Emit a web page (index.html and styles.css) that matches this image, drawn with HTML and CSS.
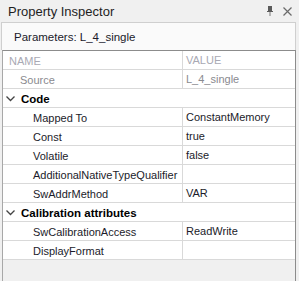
FILE: index.html
```html
<!DOCTYPE html>
<html>
<head>
<meta charset="utf-8">
<link rel="stylesheet" href="styles.css">
</head>
<body>
<div class="panel">
  <div class="titlebar">
    <span class="title">Property Inspector</span>
    <span class="tools">
      <svg class="pin" width="6" height="10" viewBox="0 0 6 10"><rect x="1" y="0" width="4" height="6" fill="#5a5a5a"/><rect x="0" y="5" width="6" height="1" fill="#5a5a5a"/><rect x="2.5" y="6" width="1" height="4" fill="#7a7a7a"/></svg>
      <svg class="close" width="9" height="9" viewBox="0 0 9 9"><path d="M0.5 0.5 L8.5 8.5 M8.5 0.5 L0.5 8.5" stroke="#6a6a6a" stroke-width="1.2"/></svg>
    </span>
  </div>
  <div class="params">Parameters: L_4_single</div>
  <div class="grid">
    <div class="row head"><div class="name">NAME</div><div class="val">VALUE</div></div>
    <div class="row src"><div class="name l1">Source</div><div class="val">L_4_single</div></div>
    <div class="row group"><span class="chev"><svg width="9" height="6" viewBox="0 0 9 6"><path d="M0.5 0.5 L4.5 4.5 L8.5 0.5" fill="none" stroke="#444" stroke-width="1.3"/></svg></span><span class="gname">Code</span></div>
    <div class="row"><div class="name l2">Mapped To</div><div class="val">ConstantMemory</div></div>
    <div class="row"><div class="name l2">Const</div><div class="val">true</div></div>
    <div class="row"><div class="name l2">Volatile</div><div class="val">false</div></div>
    <div class="row"><div class="name l2">AdditionalNativeTypeQualifier</div><div class="val"></div></div>
    <div class="row"><div class="name l2">SwAddrMethod</div><div class="val">VAR</div></div>
    <div class="row group"><span class="chev"><svg width="9" height="6" viewBox="0 0 9 6"><path d="M0.5 0.5 L4.5 4.5 L8.5 0.5" fill="none" stroke="#444" stroke-width="1.3"/></svg></span><span class="gname">Calibration attributes</span></div>
    <div class="row"><div class="name l2">SwCalibrationAccess</div><div class="val">ReadWrite</div></div>
    <div class="row"><div class="name l2">DisplayFormat</div><div class="val"></div></div>
  </div>
</div>
</body>
</html>
```

FILE: styles.css
```css
html, body {
  margin: 0;
  padding: 0;
  background: #f0f0f0;
}
body {
  font-family: "Liberation Sans", Arial, sans-serif;
  font-size: 11px;
  color: #1b1b2a;
}
.panel {
  width: 299px;
  height: 281px;
  display: flex;
  flex-direction: column;
  overflow: hidden;
  box-sizing: border-box;
}
.titlebar {
  height: 22px;
  flex: none;
  display: flex;
  align-items: center;
  justify-content: space-between;
  padding: 0 7px 0 8px;
  font-size: 13px;
  color: #1e1e1e;
}
.tools {
  display: flex;
  align-items: center;
  gap: 10px;
}
.params {
  margin: 0 3px 0 1px;
  height: 28px;
  flex: none;
  box-sizing: border-box;
  border: 1px solid #cfcfcf;
  border-bottom: none;
  background: #fafafa;
  display: flex;
  align-items: center;
  padding-left: 12px;
  font-size: 11.5px;
}
.grid {
  flex: 1;
  margin: 0 3px 0 2px;
  border-top: 1px solid #8c8c8c;
  border-left: 1px solid #a8a8a8;
  border-right: 1px solid #8c8c8c;
  background: #f0f0f0;
}
.row {
  display: flex;
  height: 19px;
  box-sizing: border-box;
  border-bottom: 1px solid #d9d9d9;
  background: #fff;
  align-items: center;
  font-size: 11px;
  padding-top: 1px;
}
.name {
  width: 179px;
  box-sizing: border-box;
  flex: none;
  height: 100%;
  display: flex;
  align-items: center;
  white-space: nowrap;
  overflow: visible;
  position: relative;
  z-index: 1;
}
.val {
  flex: 1;
  height: 100%;
  display: flex;
  align-items: center;
  border-left: 1px solid #d9d9d9;
  padding-left: 3px;
  white-space: nowrap;
  overflow: hidden;
}
.row .val { margin-top: -1px; height: calc(100% + 1px); }
.head .name { padding-left: 6px; color: #a9a9b4; }
.head .val { color: #a9a9b4; }
.l1 { padding-left: 17px; }
.src .name, .src .val { color: #8a8a8f; }
.l2 { padding-left: 30px; }
.group { padding-left: 3px; }
.chev { width: 15px; display: flex; align-items: center; }
.gname { font-weight: bold; font-size: 11.5px; color: #000; }
```
